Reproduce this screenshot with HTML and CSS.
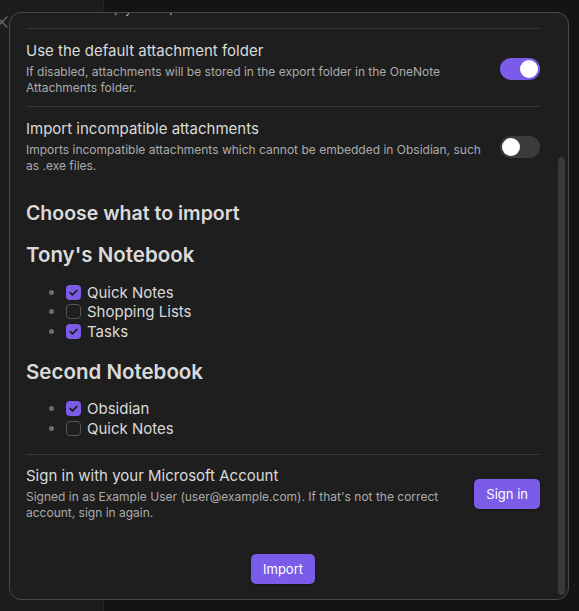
FILE: index.html
```html
<!DOCTYPE html>
<html lang="en">
<head>
<meta charset="utf-8">
<title>OneNote import</title>
<link rel="stylesheet" href="styles.css">
</head>
<body>
<div class="app">
  <aside class="sidebar">
    <svg class="close-x" width="14" height="14" viewBox="0 0 14 14"><path d="M2 2 L12 12 M12 2 L2 12" stroke="#6b6b6b" stroke-width="1.4" fill="none" stroke-linecap="round"/></svg>
  </aside>
  <main class="workspace"></main>
</div>

<div class="modal">
  <div class="modal-body">
    <div class="clip"><div class="clip-text">Turn it on to help you keep the order of the sections.</div></div>

    <div class="setting-item">
      <div class="setting-info">
        <div class="setting-name">Use the default attachment folder</div>
        <div class="setting-desc">If disabled, attachments will be stored in the export folder in the OneNote Attachments folder.</div>
      </div>
      <div class="toggle is-on"><div class="knob"></div></div>
    </div>

    <div class="setting-item">
      <div class="setting-info">
        <div class="setting-name">Import incompatible attachments</div>
        <div class="setting-desc">Imports incompatible attachments which cannot be embedded in Obsidian, such as .exe files.</div>
      </div>
      <div class="toggle"><div class="knob"></div></div>
    </div>

    <h3 class="heading">Choose what to import</h3>

    <h3 class="heading notebook">Tony's Notebook</h3>
    <ul class="section-list">
      <li><span class="check is-checked"><svg width="15" height="15" viewBox="0 0 15 15"><path d="M4.2 7.6 L6.5 9.9 L10.9 5.4" stroke="#1e1e1e" stroke-width="1.7" fill="none" stroke-linecap="round" stroke-linejoin="round"/></svg></span>Quick Notes</li>
      <li><span class="check"></span>Shopping Lists</li>
      <li><span class="check is-checked"><svg width="15" height="15" viewBox="0 0 15 15"><path d="M4.2 7.6 L6.5 9.9 L10.9 5.4" stroke="#1e1e1e" stroke-width="1.7" fill="none" stroke-linecap="round" stroke-linejoin="round"/></svg></span>Tasks</li>
    </ul>

    <h3 class="heading notebook">Second Notebook</h3>
    <ul class="section-list">
      <li><span class="check is-checked"><svg width="15" height="15" viewBox="0 0 15 15"><path d="M4.2 7.6 L6.5 9.9 L10.9 5.4" stroke="#1e1e1e" stroke-width="1.7" fill="none" stroke-linecap="round" stroke-linejoin="round"/></svg></span>Obsidian</li>
      <li><span class="check"></span>Quick Notes</li>
    </ul>

    <div class="setting-item account">
      <div class="setting-info">
        <div class="setting-name">Sign in with your Microsoft Account</div>
        <div class="setting-desc">Signed in as Example User (user@example.com). If that's not the correct account, sign in again.</div>
      </div>
      <button class="btn">Sign in</button>
    </div>

    <div class="button-row">
      <button class="btn">Import</button>
    </div>
  </div>
  <div class="scrollbar"><div class="thumb"></div></div>
</div>
</body>
</html>
```
FILE: styles.css
```css
* { box-sizing: border-box; }

html, body {
  margin: 0;
  padding: 0;
  height: 100%;
}

body {
  background: #131313;
  font-family: Inter, "Noto Sans", "Liberation Sans", sans-serif;
  color: #dadada;
  overflow: hidden;
}

.app {
  display: flex;
  height: 100vh;
}

.sidebar {
  width: 104px;
  background: #1c1c1c;
  border-right: 1px solid #252525;
  padding-top: 15px;
}

.close-x {
  display: block;
  margin-left: -5px;
}

.workspace {
  flex: 1;
  background: #141414;
}

.modal {
  position: absolute;
  left: 9px;
  top: 12px;
  width: 560px;
  height: 588px;
  background: #1e1e1e;
  border: 1px solid #484848;
  border-radius: 12px;
  overflow: hidden;
  display: flex;
}

.modal-body {
  flex: 1;
  min-width: 0;
  padding: 0 15px 16px 16px;
  display: flex;
  flex-direction: column;
}

.scrollbar {
  width: 13px;
  padding: 144px 3px 4px 3px;
  display: flex;
}

.thumb {
  flex: 1;
  background: #393939;
  border-radius: 4px;
}

.clip {
  height: 15px;
  overflow: hidden;
  display: flex;
  align-items: flex-end;
  flex-shrink: 0;
}

.clip-text {
  font-size: 12px;
  line-height: 15px;
  color: #ababab;
  white-space: nowrap;
  margin-bottom: 12px;
}

.setting-item {
  display: flex;
  align-items: center;
  border-top: 1px solid #363636;
  padding: 13px 0 11px 0;
}

.setting-item.account {
  padding: 12px 0;
}

.setting-info {
  flex: 1;
  min-width: 0;
  margin-right: 16px;
}

.setting-name {
  font-size: 15px;
  line-height: 18px;
  color: #dadada;
}

.setting-desc {
  font-size: 12px;
  line-height: 15.5px;
  color: #ababab;
  padding-top: 4px;
}

.toggle {
  width: 40px;
  height: 22px;
  border-radius: 11px;
  background: #3c3c3c;
  padding: 2px;
  display: flex;
  justify-content: flex-start;
  flex-shrink: 0;
}

.toggle.is-on {
  background: #7b5ce8;
  justify-content: flex-end;
}

.knob {
  width: 18px;
  height: 18px;
  border-radius: 50%;
  background: #ffffff;
}

.heading {
  font-size: 19.5px;
  line-height: 22.5px;
  font-weight: 600;
  color: #dadada;
  margin: 18px 0 0 0;
}

.heading.notebook {
  font-size: 20.5px;
}

.heading + .heading,
.section-list + .heading {
  margin-top: 19.5px;
}

.section-list {
  list-style: none;
  margin: 16px 0 0 0;
  padding: 0 0 0 23px;
}

.section-list + .setting-item {
  margin-top: 16px;
}

.section-list li {
  display: flex;
  align-items: center;
  font-size: 15px;
  line-height: 19.5px;
  color: #dadada;
}

.section-list li::before {
  content: "";
  width: 5px;
  height: 5px;
  border-radius: 50%;
  background: #6e6e6e;
  margin-right: 12px;
  flex-shrink: 0;
}

.check {
  width: 15px;
  height: 15px;
  border-radius: 4px;
  border: 1px solid #555555;
  margin-right: 6px;
  flex-shrink: 0;
  display: flex;
}

.check.is-checked {
  border: none;
  background: #7b5ce8;
}

.btn {
  font-family: Inter, "Noto Sans", "Liberation Sans", sans-serif;
  font-size: 13px;
  height: 30px;
  padding: 0 12px;
  border: none;
  border-radius: 5px;
  background: #7b5ce8;
  color: #ffffff;
  box-shadow: 0 1px 2px rgba(0, 0, 0, 0.3);
  flex-shrink: 0;
}

.button-row {
  display: flex;
  justify-content: center;
  margin-top: 22px;
}
```
